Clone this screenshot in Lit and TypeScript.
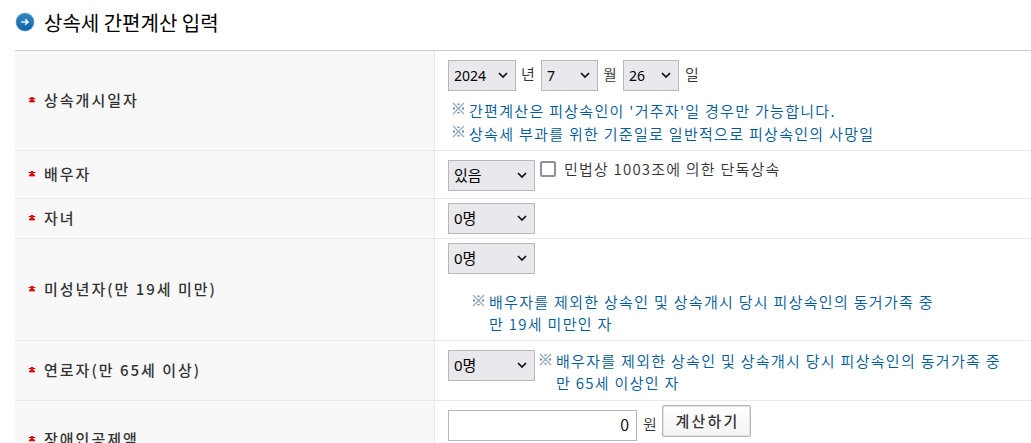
import { LitElement, html, css } from 'lit'
import { customElement, property } from 'lit/decorators.js'

@customElement('drop-select')
class DropSelect extends LitElement {
  @property() value = ''

  static styles = css`
    :host {
      display: block;
      position: relative;
      flex: none;
      width: 87px;
      height: 31px;
      font-size: 15px;
    }

    .select {
      display: block;
      box-sizing: border-box;
      width: 100%;
      height: 100%;
      margin: 0;
      padding: 0 5px;
      appearance: none;
      border: 1px solid #b7b7b7;
      border-radius: 0;
      background: #e9e9ed;
      color: #000;
      font-family: "Noto Sans", "Noto Sans CJK KR", sans-serif;
      font-size: inherit;
      line-height: 29px;
    }

    .arrow {
      position: absolute;
      right: 8px;
      top: 12px;
      pointer-events: none;
    }
  `

  render () {
    return html`
      <select class="select"><option>${this.value}</option></select>
      <svg class="arrow" width="10" height="7" viewBox="0 0 10 7" fill="none">
        <path d="M1 1L5 5L9 1" stroke="#111" stroke-width="1.7"/>
      </svg>
    `
  }
}

@customElement('form-row')
class FormRow extends LitElement {
  @property() label = ''

  static styles = css`
    :host {
      display: flex;
      box-sizing: border-box;
      border-bottom: 1px solid #e9e9e9;
    }

    .label {
      flex: none;
      display: flex;
      align-items: center;
      box-sizing: border-box;
      width: 420px;
      padding: 0 0 1px 13px;
      border-right: 1px solid #e9e9e9;
      background: #f8f8f8;
      color: #333;
      font-size: 15px;
      font-weight: 500;
      letter-spacing: 2px;
      white-space: pre;
    }

    .mark {
      flex: none;
      margin: 0 8px 1px 0;
    }

    .content {
      flex: 1;
      min-width: 0;
      padding-left: 13px;
    }
  `

  render () {
    return html`
      <div class="label">
        <svg class="mark" width="8" height="6" viewBox="0 0 8 6" shape-rendering="crispEdges">
          <path d="M2 0H6V1H8V2H6V3H7V6H1V3H2V2H0V1H2Z" fill="#f3a3a3"/>
          <path d="M3 0H5V1H7V2H5V3H6V4H7V5H1V4H2V3H3V2H1V1H3Z" fill="#d80c0c"/>
        </svg>
        <span>${this.label}</span>
      </div>
      <div class="content"><slot></slot></div>
    `
  }
}

@customElement('app-root')
class AppRoot extends LitElement {
  static styles = css`
    :host {
      display: block;
      height: 443px;
      overflow: hidden;
      background: #fff;
      color: #333;
      font: 14px/22px "Noto Sans CJK KR", sans-serif;
    }

    .header {
      display: flex;
      align-items: center;
      height: 50px;
      padding-left: 15px;
      box-sizing: border-box;
      padding-bottom: 6px;
    }

    .title {
      margin: 1px 0 0 9px;
      color: #000;
      font-size: 20px;
      font-weight: 400;
    }

    .table {
      margin-left: 15px;
      border-top: 1px solid #ccc;
    }

    .date { height: 100px; }
    .spouse { height: 48px; }
    .children { height: 40px; }
    .minors { height: 102px; }
    .elders { height: 60px; }
    .disabled { height: 78px; }

    .line {
      display: flex;
      align-items: flex-start;
      padding-top: 4px;
    }

    .date .line { padding-top: 9px; }
    .spouse .line { padding-top: 9px; }
    .elders .line { padding-top: 9px; }

    .year, .month, .day { font-size: 14px; }
    .year { width: 68px; margin-right: 5px; }
    .month { width: 57px; margin: 0 5px 0 6px; }
    .day { width: 56px; margin: 0 6px; }

    .unit {
      width: 14px;
      padding-top: 3px;
      font-size: 15px;
      font-weight: 350;
    }

    .check {
      flex: none;
      box-sizing: border-box;
      width: 16px;
      height: 16px;
      margin: 1px 8px 0 5px;
      appearance: none;
      border: 2px solid #8f8f9d;
      border-radius: 2px;
      background: #fff;
    }

    .check-label {
      margin-top: -2px;
      font-size: 15px;
      font-weight: 350;
      letter-spacing: 1.2px;
      white-space: nowrap;
    }

    .note {
      display: flex;
      color: #005a96;
      font-size: 15px;
      font-weight: 350;
      letter-spacing: 1.3px;
      white-space: nowrap;
    }

    .note svg {
      flex: none;
      margin: 3px 4px 0 -1px;
    }

    .notes {
      padding: 8px 0 0 5px;
      line-height: 23px;
    }

    .minors .note { padding: 17px 0 0 25px; }
    .elders .note { margin: 0 0 0 5px; }

    .amount {
      box-sizing: border-box;
      width: 189px;
      height: 31px;
      margin: 5px 6px 0 0;
      padding: 0 7px 3px;
      border: 1px solid #b7b7b7;
      text-align: right;
      color: #000;
      font: 350 16px "Noto Sans CJK KR", sans-serif;
    }

    .disabled .unit { padding-top: 8px; }

    .button {
      box-sizing: border-box;
      width: 89px;
      height: 32px;
      margin-left: 5px;
      padding: 0 0 2px 2px;
      border: 1px solid #b5b5b5;
      border-radius: 2px;
      box-shadow: inset 0 0 0 1px #e2e2e2;
      background: linear-gradient(#fff, #f3f3f3);
      color: #333;
      font: 500 15px "Noto Sans CJK KR", sans-serif;
      letter-spacing: 2.2px;
    }
  `

  _renderNote (text: unknown) {
    return html`
      <div class="note">
        <svg width="13" height="13" viewBox="0 0 13 13" fill="none">
          <path d="M1 1L12 12M12 1L1 12" stroke="#8fa9c4" stroke-width="1.2"/>
          <path d="M5.5 1.5H7.5V3H5.5ZM5.5 10H7.5V11.5H5.5ZM1 5.5H3V7.5H1ZM10 5.5H12V7.5H10Z" fill="#6989aa"/>
        </svg>
        <div>${text}</div>
      </div>
    `
  }

  render () {
    return html`
      <div class="header">
        <svg width="20" height="20" viewBox="0 0 20 20">
          <defs>
            <linearGradient id="disc" x1="0" y1="0" x2="0" y2="1">
              <stop offset="0" stop-color="#3687bd"/>
              <stop offset="1" stop-color="#0e65a8"/>
            </linearGradient>
          </defs>
          <circle cx="10" cy="10" r="9.5" fill="#9bc4de"/>
          <circle cx="10" cy="10" r="8.8" fill="url(#disc)"/>
          <path d="M6.2 10H13M10.2 7.2L13 10L10.2 12.8" fill="none" stroke="#e8f6fd" stroke-width="1.6"/>
        </svg>
        <h1 class="title">상속세 간편계산 입력</h1>
      </div>
      <div class="table">
        <form-row class="date" label="상속개시일자">
          <div class="line">
            <drop-select class="year" value="2024"></drop-select>
            <span class="unit">년</span>
            <drop-select class="month" value="7"></drop-select>
            <span class="unit">월</span>
            <drop-select class="day" value="26"></drop-select>
            <span class="unit">일</span>
          </div>
          <div class="notes">
            ${this._renderNote("간편계산은 피상속인이 '거주자'일 경우만 가능합니다.")}
            ${this._renderNote('상속세 부과를 위한 기준일로 일반적으로 피상속인의 사망일')}
          </div>
        </form-row>
        <form-row class="spouse" label="배우자">
          <div class="line">
            <drop-select value="있음"></drop-select>
            <input class="check" type="checkbox">
            <span class="check-label">민법상 1003조에 의한 단독상속</span>
          </div>
        </form-row>
        <form-row class="children" label="자녀">
          <div class="line"><drop-select value="0명"></drop-select></div>
        </form-row>
        <form-row class="minors" label="미성년자(만 19세 미만)">
          <div class="line"><drop-select value="0명"></drop-select></div>
          ${this._renderNote(html`배우자를 제외한 상속인 및 상속개시 당시 피상속인의 동거가족 중<br>만 19세 미만인 자`)}
        </form-row>
        <form-row class="elders" label="연로자(만 65세 이상)">
          <div class="line">
            <drop-select value="0명"></drop-select>
            ${this._renderNote(html`배우자를 제외한 상속인 및 상속개시 당시 피상속인의 동거가족 중<br>만 65세 이상인 자`)}
          </div>
        </form-row>
        <form-row class="disabled" label="장애인공제액">
          <div class="line">
            <input class="amount" value="0">
            <span class="unit">원</span>
            <button class="button">계산하기</button>
          </div>
        </form-row>
      </div>
    `
  }
}
